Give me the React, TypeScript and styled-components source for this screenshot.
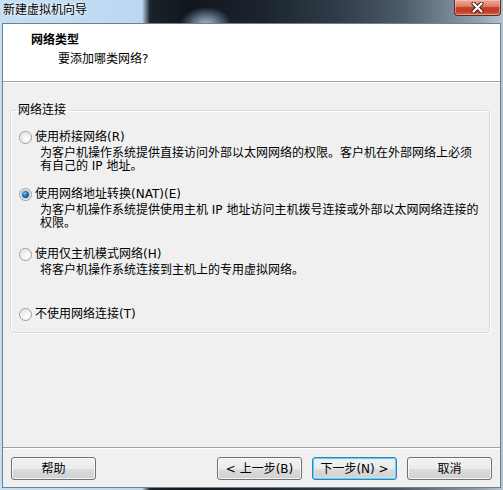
import React from "react";
import styled, { createGlobalStyle } from "styled-components";

const FONT = `"DejaVu Sans", "Noto Sans CJK SC", sans-serif`;
const CJK = `"Noto Sans CJK SC", sans-serif`;

const GlobalStyle = createGlobalStyle`
  html, body { margin: 0; padding: 0; background: #ffffff; }
  body { font-family: ${FONT}; }
  * { box-sizing: border-box; }
`;

const Window = styled.div`
  width: 503px;
  height: 490px;
  display: flex;
  flex-direction: column;
  background:
    radial-gradient(ellipse 26px 18px at 206px 25px, rgba(175, 205, 235, 0.95), rgba(175, 205, 235, 0) 100%),
    linear-gradient(90deg, #c4def4 0px, #bcd8f1 142px, #1a222b 150px, #10161d 190px, #1b242e 260px, #313d49 340px, #4c5966 400px, #6f7d8b 440px, #94a2b0 480px, #b4c4d3 503px);
`;

const TitleBar = styled.div`
  height: 23px;
  display: flex;
  align-items: flex-start;
  padding: 0 2px 0 3px;
`;

const Title = styled.span`
  margin-top: 2px;
  font: 12px/14px ${CJK};
  color: #000;
  text-shadow: 0 0 6px rgba(255, 255, 255, 0.9), 0 0 3px rgba(255, 255, 255, 0.8);
`;

const CloseButton = styled.div`
  margin-left: auto;
  width: 47px;
  height: 16px;
  border: 1px solid #5e2a22;
  border-top: none;
  border-radius: 0 0 4px 4px;
  background: linear-gradient(180deg, #e9a99b 0%, #dc8068 42%, #c4442b 50%, #c03d24 75%, #d9694d 100%);
  box-shadow: inset 0 0 0 1px rgba(255, 215, 205, 0.45);
  display: flex;
  align-items: center;
  justify-content: center;
`;

const Client = styled.div`
  flex: 1;
  display: flex;
  flex-direction: column;
  margin: 0 2px 2px 2px;
  border: 1px solid #6f8091;
  background: #f0f0f0;
`;

const Header = styled.div`
  height: 58px;
  background: #ffffff;
  border-bottom: 1px solid #a0a0a0;
  padding: 8px 0 0 28px;
`;

const HeaderTitle = styled.div`
  font: bold 12px/14px ${CJK};
  color: #000;
`;

const HeaderSubtitle = styled.div`
  margin: 6px 0 0 27px;
  font: 12px/14px ${FONT};
  color: #000;
`;

const Body = styled.div`
  flex: 1;
  padding: 21px 10px 0 7px;
  box-shadow: inset 0 1px #ffffff;
`;

const GroupBox = styled.fieldset`
  margin: 0;
  min-width: 0;
  border: 1px solid #d5dfe5;
  border-radius: 3px;
  padding: 14px 8px 11px 8px;
  box-shadow: inset 1px 1px #ffffff, 1px 1px #ffffff;
`;

const Legend = styled.legend`
  padding: 0 2px;
  margin-left: -3px;
  font: 12px/14px ${FONT};
  color: #000;
`;

const Option = styled.div<{ $h?: number }>`
  height: ${(p) => (p.$h ? `${p.$h}px` : "auto")};
`;

const OptionLabel = styled.div`
  display: flex;
  align-items: center;
  gap: 3px;
  font: 12px/13px ${FONT};
  color: #000;
  white-space: nowrap;
`;

const Radio = styled.span<{ $checked?: boolean }>`
  position: relative;
  flex: none;
  width: 13px;
  height: 13px;
  border-radius: 50%;
  border: 1px solid #9a9a9a;
  background: radial-gradient(circle at 65% 70%, #ffffff 0%, #f4f4f4 35%, #d8d8d8 100%);
  box-shadow: inset 0 0 0 1px #f6f6f6;
  &::after {
    content: "";
    display: ${(p) => (p.$checked ? "block" : "none")};
    position: absolute;
    left: 2px;
    top: 2px;
    width: 7px;
    height: 7px;
    border-radius: 50%;
    background: radial-gradient(circle at 40% 35%, #7ec2f0 0%, #2b6fa6 45%, #0d2f4e 100%);
    box-shadow: 0 0 0 1px rgba(120, 170, 210, 0.6);
  }
`;

const Desc = styled.div`
  margin: 3px 0 0 21px;
  font: 12px/13px ${FONT};
  color: #000;
  white-space: nowrap;
`;

const Footer = styled.div`
  height: 40px;
  border-top: 1px solid #a0a0a0;
  box-shadow: inset 0 1px #ffffff;
  display: flex;
  align-items: flex-start;
  padding: 9px 8px 0 8px;
`;

const ButtonGroup = styled.div`
  margin-left: auto;
  display: flex;
  gap: 10px;
`;

const Button = styled.button<{ $default?: boolean }>`
  width: 85px;
  height: 23px;
  padding: 0;
  border: 1px solid ${(p) => (p.$default ? "#3c7fb1" : "#707070")};
  border-radius: 3px;
  background: linear-gradient(180deg, #f2f2f2 0%, #ebebeb 50%, #dddddd 50%, #cfcfcf 100%);
  box-shadow: ${(p) =>
    p.$default
      ? "inset 0 0 0 1px #5fd0f5, inset 0 0 0 2px rgba(200, 240, 255, 0.6)"
      : "inset 0 0 0 1px rgba(255, 255, 255, 0.75)"};
  font: 12px/1 ${FONT};
  color: #000;
  display: flex;
  align-items: center;
  justify-content: center;
`;

const CloseIcon = () => (
  <svg width="13" height="11" viewBox="0 0 13 11">
    <path d="M2.5 1.5 L10.5 9.5 M10.5 1.5 L2.5 9.5" stroke="#4a1a12" strokeWidth="4" strokeLinecap="round" />
    <path d="M2.5 1.5 L10.5 9.5 M10.5 1.5 L2.5 9.5" stroke="#ffffff" strokeWidth="2.2" strokeLinecap="round" />
  </svg>
);

type Opt = { label: string; desc: string[]; checked?: boolean; h?: number };

const options: Opt[] = [
  {
    label: "使用桥接网络(R)",
    desc: ["为客户机操作系统提供直接访问外部以太网网络的权限。客户机在外部网络上必须", "有自己的 IP 地址。"],
    h: 57,
  },
  {
    label: "使用网络地址转换(NAT)(E)",
    desc: ["为客户机操作系统提供使用主机 IP 地址访问主机拨号连接或外部以太网网络连接的", "权限。"],
    checked: true,
    h: 60,
  },
  {
    label: "使用仅主机模式网络(H)",
    desc: ["将客户机操作系统连接到主机上的专用虚拟网络。"],
    h: 60,
  },
  { label: "不使用网络连接(T)", desc: [] },
];

export default function App() {
  return (
    <>
      <GlobalStyle />
      <Window>
        <TitleBar>
          <Title>新建虚拟机向导</Title>
          <CloseButton>
            <CloseIcon />
          </CloseButton>
        </TitleBar>
        <Client>
          <Header>
            <HeaderTitle>网络类型</HeaderTitle>
            <HeaderSubtitle>要添加哪类网络?</HeaderSubtitle>
          </Header>
          <Body>
            <GroupBox>
              <Legend>网络连接</Legend>
              {options.map((o) => (
                <Option key={o.label} $h={o.h}>
                  <OptionLabel>
                    <Radio $checked={o.checked} />
                    {o.label}
                  </OptionLabel>
                  {o.desc.length > 0 && (
                    <Desc>
                      {o.desc.map((line, i) => (
                        <div key={i}>{line}</div>
                      ))}
                    </Desc>
                  )}
                </Option>
              ))}
            </GroupBox>
          </Body>
          <Footer>
            <Button>帮助</Button>
            <ButtonGroup>
              <Button>&lt; 上一步(B)</Button>
              <Button $default>下一步(N) &gt;</Button>
              <Button>取消</Button>
            </ButtonGroup>
          </Footer>
        </Client>
      </Window>
    </>
  );
}
